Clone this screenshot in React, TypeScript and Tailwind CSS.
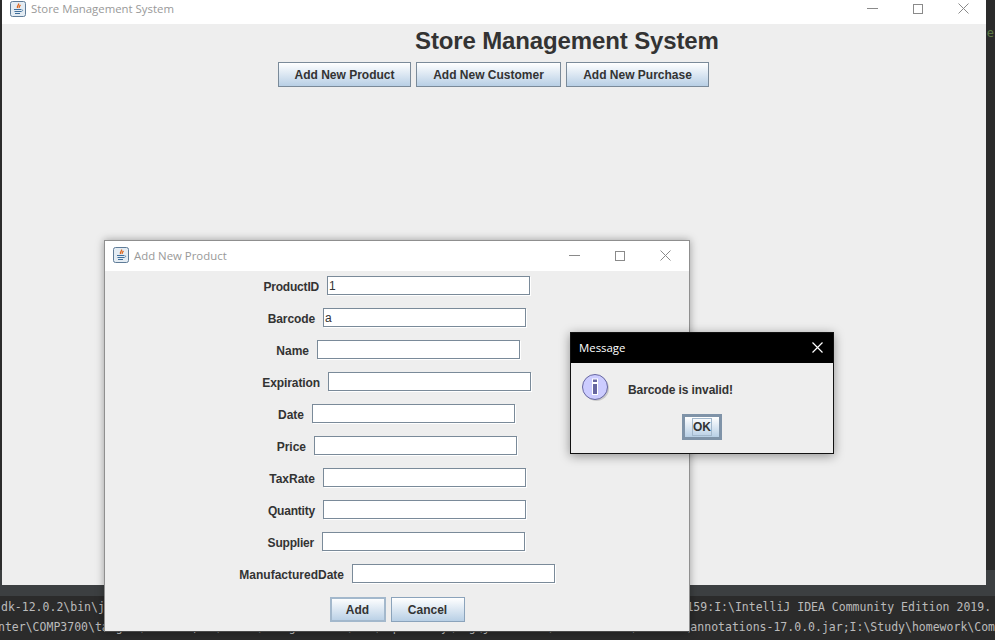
import React from 'react';

const fields = [
  { label: 'ProductID', value: '1', width: 'w-[53px]', tracking: 'tracking-[-0.2px]' },
  { label: 'Barcode', value: 'a', width: 'w-[45px]', tracking: 'tracking-[-0.1px]' },
  { label: 'Name', value: '', width: 'w-[33px]', tracking: '' },
  { label: 'Expiration', value: '', width: 'w-[55px]', tracking: 'tracking-[-0.1px]' },
  { label: 'Date', value: '', width: 'w-[23px]', tracking: '' },
  { label: 'Price', value: '', width: 'w-[27px]', tracking: '' },
  { label: 'TaxRate', value: '', width: 'w-[45px]', tracking: '' },
  { label: 'Quantity', value: '', width: 'w-[45px]', tracking: 'tracking-[-0.2px]' },
  { label: 'Supplier', value: '', width: 'w-[43px]', tracking: 'tracking-[-0.2px]' },
  { label: 'ManufacturedDate', value: '', width: 'w-[103px]', tracking: '' },
];

function JavaIcon() {
  return (
    <svg width="16" height="16" viewBox="0 0 16 16" className="shrink-0">
      <rect x="0.5" y="0.5" width="15" height="15" rx="2" fill="#e4ecf3" stroke="#5f7c98" />
      <path d="M8.5 2.5c1 1.5-2 2.5-1 4.5M10.5 4c-1 1-2 1.5-1.2 3" fill="none" stroke="#e0661c" strokeWidth="1.3" />
      <path d="M4 8.5h7M4.5 10.5h6.5M5 12.5h5" fill="none" stroke="#3f6f9c" strokeWidth="1" />
      <path d="M11.5 8.5c1.5 0 1.5 2-.5 2" fill="none" stroke="#3f6f9c" strokeWidth="0.8" />
    </svg>
  );
}

function WindowControls() {
  return (
    <div className="flex items-center gap-[35px]">
      <div className="w-[11px] h-px bg-[#8a8a8a]" />
      <div className="w-[10px] h-[10px] border border-[#8a8a8a]" />
      <svg width="11" height="11" viewBox="0 0 11 11">
        <path d="M0.5 0.5l10 10M10.5 0.5l-10 10" stroke="#8a8a8a" strokeWidth="1" />
      </svg>
    </div>
  );
}

function SwingButton({ children, className }: { children: React.ReactNode; className: string }) {
  return (
    <button className={`h-[25px] border bg-gradient-to-b from-white to-[#b8cfe5] text-[12px] font-bold text-[#333333] ${className}`}>
      {children}
    </button>
  );
}

export default function App() {
  return (
    <div className="relative h-screen w-full overflow-hidden bg-[#2b2b2b] font-['Liberation_Sans',sans-serif] flex flex-col">
      <div className="h-[570px] flex justify-end">
        <span className="mt-[24px] mr-[1px] text-[12px] text-[#5c7a45] font-['DejaVu_Sans_Mono',monospace]">e</span>
      </div>
      <div className="h-[26px] bg-[#3c3f41]" />
      <div className="flex-1 pt-[1px] text-[11.5px] leading-[20px] text-[#bbbbbb] whitespace-pre font-['DejaVu_Sans_Mono',monospace]">
        <div className="ml-[1px]">{'dk-12.0.2\\bin\\java.exe -javaagent:I:\\Apps\\IntelliJ IDEA Community Edition 2019.2\\lib\\idea_rt.jar=54159:I:\\IntelliJ IDEA Community Edition 2019.'}</div>
        <div className="-ml-[2px]">{'nter\\COMP3700\\target\\classes;C:\\Users\\testgrade001\\.m2\\repository\\org\\jetbrains\\annotations\\017.0.0\\annotations-17.0.0.jar;I:\\Study\\homework\\Com'}</div>
      </div>

      {/* main window */}
      <div className="absolute left-[2px] top-0 w-[984px] h-[585px] bg-[#eeeeee] flex flex-col">
        <div className="h-[24px] bg-white flex items-center justify-between pl-[8px] pr-[17px] pb-[7px]">
          <div className="flex items-center gap-[5px]">
            <JavaIcon />
            <span className="text-[11.4px] text-[#999999] font-['Open_Sans',sans-serif]">Store Management System</span>
          </div>
          <WindowControls />
        </div>
        <h1 className="pl-[413px] h-[38px] text-[24px] leading-[34px] font-bold tracking-[-0.13px] text-[#333333]">Store Management System</h1>
        <div className="flex justify-center gap-[5px] pr-[1px]">
          <SwingButton className="w-[133px] border-[#7a8a99]">Add New Product</SwingButton>
          <SwingButton className="w-[145px] border-[#7a8a99]">Add New Customer</SwingButton>
          <SwingButton className="w-[143px] border-[#7a8a99]">Add New Purchase</SwingButton>
        </div>
      </div>

      {/* add new product dialog */}
      <div className="absolute left-[104px] top-[240px] w-[586px] h-[392px] bg-[#eeeeee] border border-[#8f8f8f] border-b-[#4a4a4a] shadow-[0_0_8px_rgba(0,0,0,0.35)] flex flex-col">
        <div className="h-[30px] bg-white flex items-center justify-between pl-[8px] pr-[18px] pb-[1px] shrink-0">
          <div className="flex items-center gap-[5px]">
            <JavaIcon />
            <span className="text-[11.4px] text-[#999999] font-['Open_Sans',sans-serif]">Add New Product</span>
          </div>
          <WindowControls />
        </div>
        <div className="flex flex-col gap-[12px] pt-[5px] pl-[2px]">
          {fields.map((f) => (
            <div key={f.label} className="flex items-center justify-center gap-[8px] h-[20px]">
              <div className={`flex justify-end shrink-0 ${f.width}`}>
                <span className={`whitespace-nowrap pt-[1px] text-[12px] font-bold text-[#333333] ${f.tracking}`}>{f.label}</span>
              </div>
              <div className="w-[203px] h-[19px] mb-[1px] border border-[#7a8a99] bg-white shadow-[1px_1px_0_#ffffff] text-[12px] leading-[19px] pl-[1px] text-[#333333]">
                {f.value}
              </div>
            </div>
          ))}
        </div>
        <div className="flex justify-center gap-[5px] mt-[13px]">
          <SwingButton className="w-[56px] border-[#a3b8cc] shadow-[inset_0_0_0_1px_#a3b8cc]">Add</SwingButton>
          <SwingButton className="w-[74px] border-[#8ba3bb]">Cancel</SwingButton>
        </div>
      </div>

      {/* message box */}
      <div className="absolute left-[570px] top-[332px] w-[264px] h-[122px] bg-[#eeeeee] border border-[#111111] shadow-[0_2px_10px_rgba(0,0,0,0.4)] flex flex-col">
        <div className="h-[30px] bg-black flex items-center justify-between pl-[8px] pr-[10px] pb-[1px] shrink-0">
          <span className="text-[11.4px] text-white font-['Open_Sans',sans-serif]">Message</span>
          <svg width="11" height="11" viewBox="0 0 11 11">
            <path d="M0.5 0.5l10 10M10.5 0.5l-10 10" stroke="#ffffff" strokeWidth="1.2" />
          </svg>
        </div>
        <div className="flex items-center gap-[18px] pl-[11px] pt-[11px]">
          <svg width="28" height="28" viewBox="0 0 28 28" className="shrink-0">
            <circle cx="14.5" cy="14.5" r="12.5" fill="#000000" opacity="0.15" />
            <circle cx="13" cy="13" r="12.5" fill="#ccccff" stroke="#6666a0" />
            <rect x="10.5" y="5" width="5" height="3.5" fill="#6666a0" stroke="#ffffff" strokeWidth="1" />
            <rect x="10.5" y="9.5" width="5" height="11" fill="#6666a0" stroke="#ffffff" strokeWidth="1" />
          </svg>
          <span className="text-[12px] font-bold tracking-[-0.1px] text-[#333333] mt-[4px]">Barcode is invalid!</span>
        </div>
        <div className="flex justify-center mt-[12px]">
          <button className="w-[40px] h-[26px] border-[3px] border-[#7f93a8] bg-gradient-to-b from-white to-[#b8cfe5] text-[12px] font-bold text-[#333333] flex items-center justify-center">
            <span className="w-[20px] h-[18px] border border-[#a3b8cc] leading-[16px] text-center">OK</span>
          </button>
        </div>
      </div>
    </div>
  );
}
